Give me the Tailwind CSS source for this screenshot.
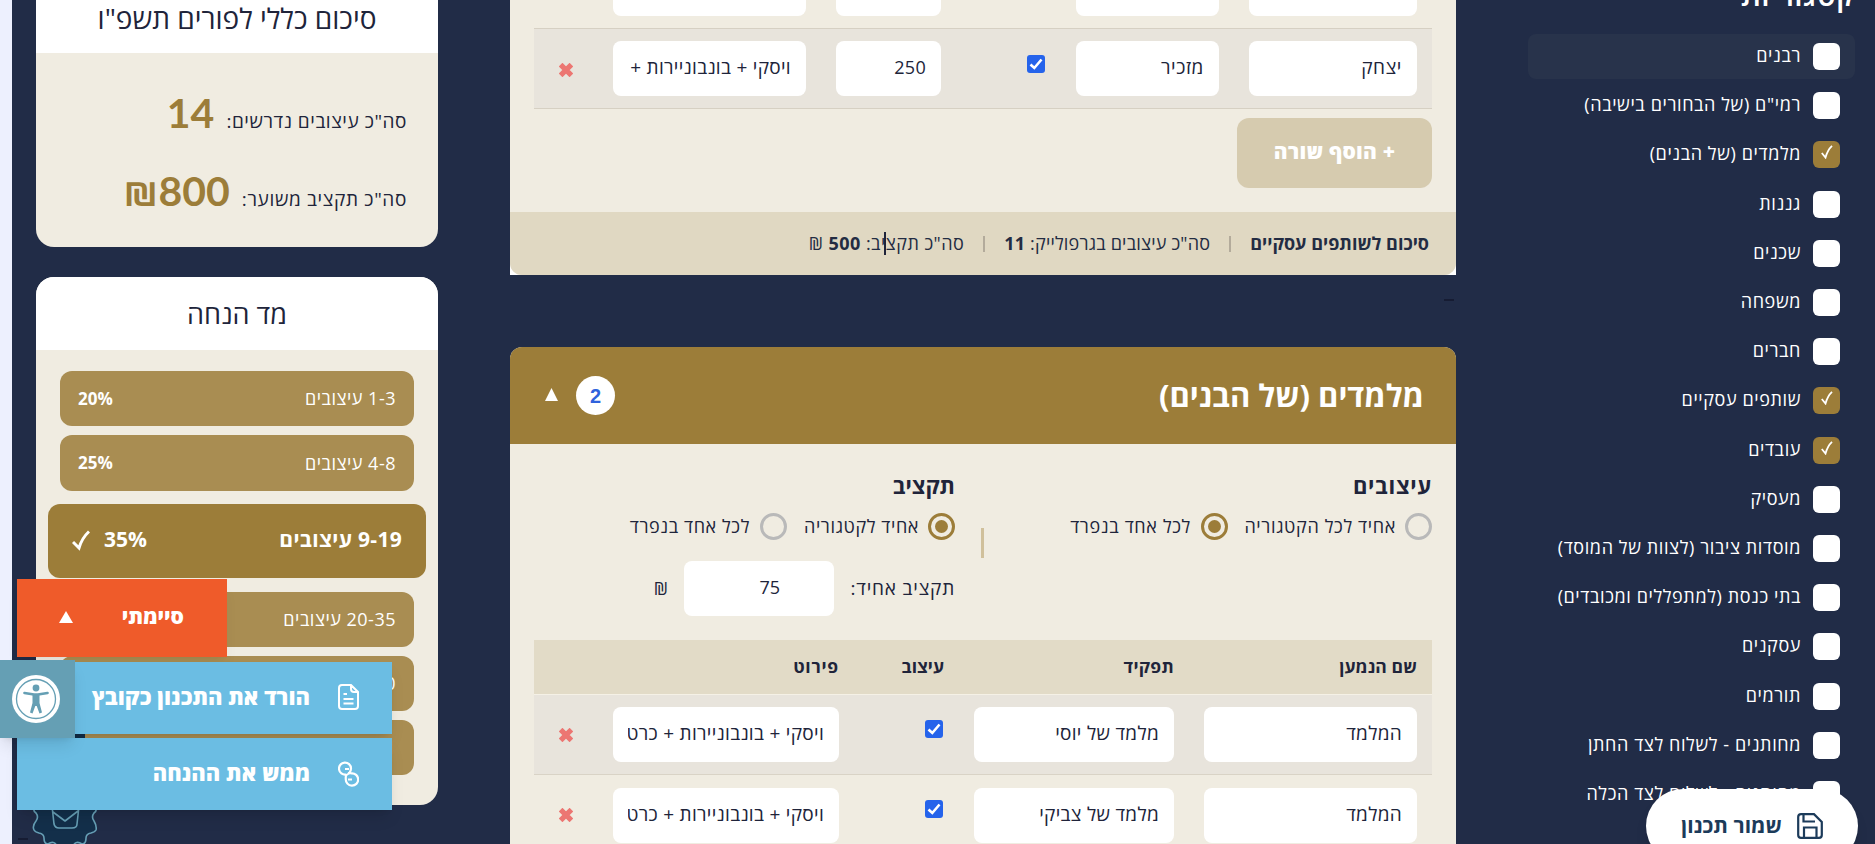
<!DOCTYPE html>
<html lang="he" dir="rtl">
<head>
  <meta charset="UTF-8" />
  <title>תכנון משלוחים</title>
  <script src="https://cdn.jsdelivr.net/npm/@tailwindcss/browser@4"></script>
</head>
<body class="h-[844px] overflow-hidden bg-[#212c47] font-['Open_Sans','Liberation_Sans',sans-serif] text-[#20243a]">
  <div class="relative flex h-full overflow-hidden">
    <!-- Categories -->
    <aside class="w-[347px] shrink-0 pr-5 text-white">
      <h2 class="-mt-6 mb-5 h-[38px] text-[30px] leading-[38px] font-semibold tracking-[.4px]">קטגוריות</h2>
      <ul id="categories" class="flex flex-col gap-1"></ul>
    </aside>

    <main class="mr-[72px] h-full w-[946px] shrink-0 overflow-hidden">
      <!-- Business partners -->
      <section class="h-[275px] bg-white">
        <div class="flex h-full flex-col overflow-hidden rounded-b-xl bg-[#f0ece1]">
          <div class="mx-6 flex h-7">
            <div class="mr-[15px] h-4 w-[168px] rounded-b-lg bg-white"></div>
            <div class="mr-[30px] h-4 w-[143px] rounded-b-lg bg-white"></div>
            <div class="mr-[135px] h-4 w-[105px] rounded-b-lg bg-white"></div>
            <div class="mr-[30px] h-4 w-[193px] rounded-b-lg bg-white"></div>
          </div>
          <div class="mx-6 flex h-[81px] shrink-0 items-center border-y border-[#d6d0c3] bg-[#e8e4dc] text-[19px] tracking-[.3px]">
            <div class="w-[198px] px-[15px]"><div class="h-[55px] rounded-lg bg-white px-[15px] leading-[53px] tracking-[.6px]">יצחק</div></div>
            <div class="w-[173px] px-[15px]"><div class="h-[55px] rounded-lg bg-white px-[15px] leading-[53px] tracking-[.6px]">מזכיר</div></div>
            <div class="w-[105px] px-[16px] pb-2.5">
              <svg class="size-[18px] rounded-[3px] bg-[#2563eb]" viewBox="0 0 18 18" fill="none" stroke="#fff" stroke-width="2.6"><path d="M3.5 9.5 7.3 13 14.5 4.5" /></svg>
            </div>
            <div class="w-[135px] px-[15px]"><div class="h-[55px] rounded-lg bg-white px-[15px] text-[18px] leading-[53px]">250</div></div>
            <div class="w-[223px] px-[15px]"><div class="h-[55px] overflow-hidden rounded-lg bg-white px-[15px] leading-[53px] whitespace-nowrap">ויסקי + בונבוניירות +</div></div>
            <div class="flex w-16 justify-center"><svg class="mt-0.5 size-[14px]" viewBox="0 0 14 14" stroke="#ec7672" stroke-width="5.2"><path d="M1.6 1.6 12.4 12.4M12.4 1.6 1.6 12.4" /></svg></div>
          </div>
          <button class="mt-[9px] mr-6 h-[70px] w-[195px] shrink-0 rounded-xl bg-[#d6cbaf] pb-0.5 text-[21px] font-extrabold tracking-[.2px] text-white">+ הוסף שורה</button>
          <footer class="mt-6 flex h-[63px] items-center bg-[#e0d8c2] pr-[27px] text-[18px] text-[#232c42]">
            <b>סיכום לשותפים עסקיים</b>
            <span class="mx-[19px] h-4 w-0.5 bg-[#b3ab9b]"></span>
            <span class="tracking-[.2px]">סה"כ עיצובים בגרפולייק: <b>11</b></span>
            <span class="mx-[19px] h-4 w-0.5 bg-[#b3ab9b]"></span>
            <span class="tracking-[.45px]">סה"כ תקציב: <b>500</b> ₪</span>
          </footer>
        </div>
      </section>

      <div class="h-[72px] pt-6 pr-0.5"><div class="h-0.5 w-2.5 bg-[#161c33]"></div></div>

      <!-- Teachers -->
      <section class="h-[600px] overflow-hidden rounded-t-xl bg-[#f0ece1]">
        <header class="flex h-[97px] items-center bg-[#9c7d39] pr-[32px] pl-[35px] text-white">
          <h3 class="text-[31px] font-bold">מלמדים (של הבנים)</h3>
          <span class="mr-auto flex size-[39px] items-center justify-center rounded-full bg-white font-['Liberation_Sans'] text-[20px] font-bold text-[#2f62dc]">2</span>
          <svg class="mr-[18px] mb-0.5 h-[13px] w-[13px]" viewBox="0 0 13 13" fill="#fff"><path d="M6.5 0 13 13H0Z" /></svg>
        </header>

        <div class="flex h-[196px] px-6 pt-[25px]">
          <div class="w-[448px]">
            <h4 class="h-[44px] text-[22px] leading-8 font-bold tracking-[.7px]">עיצובים</h4>
            <div class="flex items-center text-[18px] tracking-[.65px]">
              <span class="size-[27px] shrink-0 rounded-full border-3 border-[#b9b9b9]"></span>
              <span class="mr-[9px] w-[168px] leading-[27px] whitespace-nowrap">אחיד לכל הקטגוריה</span>
              <span class="flex size-[27px] items-center justify-center rounded-full border-3 border-[#9c7d39]"><i class="size-[13px] rounded-full bg-[#9c7d39]"></i></span>
              <span class="mr-[10px]">לכל אחד בנפרד</span>
            </div>
          </div>
          <div class="mt-[59px] h-[30px] w-[3px] bg-[#d0c09b]"></div>
          <div class="mr-[26px] flex-1">
            <h4 class="h-[44px] text-[22px] leading-8 font-bold">תקציב</h4>
            <div class="flex items-center text-[18px] tracking-[.6px]">
              <span class="flex size-[27px] items-center justify-center rounded-full border-3 border-[#9c7d39]"><i class="size-[13px] rounded-full bg-[#9c7d39]"></i></span>
              <span class="mr-[9px] w-[132px] leading-[27px] whitespace-nowrap">אחיד לקטגוריה</span>
              <span class="size-[27px] rounded-full border-3 border-[#b9b9b9]"></span>
              <span class="mr-[10px]">לכל אחד בנפרד</span>
            </div>
            <div class="mt-[21px] flex items-center text-[18px]">
              <span class="w-[121px] text-[19px] tracking-[.8px] whitespace-nowrap">תקציב אחיד:</span>
              <span class="h-[55px] w-[150px] rounded-lg bg-white pr-[54px] leading-[53px]">75</span>
              <span class="mr-4">₪</span>
            </div>
          </div>
        </div>

        <div class="mx-6 text-[19px] tracking-[.3px]">
          <div class="flex h-[55px] items-center border-b border-[#f5f1e6] bg-[#e2dbc7] pb-0.5 text-[17.5px] font-bold">
            <div class="w-[243px] pr-[15px] tracking-[.1px]">שם הנמען</div>
            <div class="w-[230px] pr-[15px]">תפקיד</div>
            <div class="w-[105px] pr-[15px] tracking-normal">עיצוב</div>
            <div class="pr-[15px] tracking-[.8px]">פירוט</div>
          </div>
          <div class="flex h-20 items-center border-b border-[#d9d3c6] bg-[#e8e4dc]">
            <div class="w-[243px] px-[15px]"><div class="h-[55px] rounded-lg bg-white px-[15px] leading-[53px]">המלמד</div></div>
            <div class="w-[230px] px-[15px]"><div class="h-[55px] rounded-lg bg-white px-[15px] leading-[53px]">מלמד של יוסי</div></div>
            <div class="w-[105px] px-[16px] pb-3">
              <svg class="size-[18px] rounded-[3px] bg-[#2563eb]" viewBox="0 0 18 18" fill="none" stroke="#fff" stroke-width="2.6"><path d="M3.5 9.5 7.3 13 14.5 4.5" /></svg>
            </div>
            <div class="w-[256px] px-[15px]"><div class="h-[55px] rounded-lg bg-white px-[15px] leading-[53px]"><div class="overflow-hidden whitespace-nowrap">ויסקי + בונבוניירות + כרטיס</div></div></div>
            <div class="flex w-16 justify-center"><svg class="size-[14px]" viewBox="0 0 14 14" stroke="#ec7672" stroke-width="5.2"><path d="M1.6 1.6 12.4 12.4M12.4 1.6 1.6 12.4" /></svg></div>
          </div>
          <div class="flex h-20 items-center">
            <div class="w-[243px] px-[15px]"><div class="h-[55px] rounded-lg bg-white px-[15px] leading-[53px]">המלמד</div></div>
            <div class="w-[230px] px-[15px]"><div class="h-[55px] rounded-lg bg-white px-[15px] leading-[53px]">מלמד של צביקי</div></div>
            <div class="w-[105px] px-[16px] pb-3">
              <svg class="size-[18px] rounded-[3px] bg-[#2563eb]" viewBox="0 0 18 18" fill="none" stroke="#fff" stroke-width="2.6"><path d="M3.5 9.5 7.3 13 14.5 4.5" /></svg>
            </div>
            <div class="w-[256px] px-[15px]"><div class="h-[55px] rounded-lg bg-white px-[15px] leading-[53px]"><div class="overflow-hidden whitespace-nowrap">ויסקי + בונבוניירות + כרטיס</div></div></div>
            <div class="flex w-16 justify-center"><svg class="size-[14px]" viewBox="0 0 14 14" stroke="#ec7672" stroke-width="5.2"><path d="M1.6 1.6 12.4 12.4M12.4 1.6 1.6 12.4" /></svg></div>
          </div>
        </div>
      </section>
    </main>

    <!-- Summary and discount meter -->
    <aside class="mr-[72px] w-[402px] shrink-0">
      <section class="h-[247px] overflow-hidden rounded-b-[18px] bg-[#f0ece1]">
        <h3 class="h-[53px] bg-white text-center text-[28px] leading-9">סיכום כללי לפורים תשפ"ו</h3>
        <div class="mt-[29px] flex h-[61px] items-baseline gap-3 pr-[31px] text-[19px] tracking-[.55px]">סה"כ עיצובים נדרשים: <b class="font-['Lato','Open_Sans'] text-[41px] tracking-normal text-[#9c7d39]">14</b></div>
        <div class="mt-[17px] flex h-[61px] items-baseline gap-3 pr-[31px] text-[19px] tracking-[.65px]">סה"כ תקציב משוער: <b class="flex font-['Lato','Open_Sans'] text-[41px] tracking-normal text-[#9c7d39]"><span>800</span><span>₪</span></b></div>
      </section>

      <section class="mt-[30px] h-[528px] overflow-hidden rounded-[18px] bg-[#f0ece1]">
        <h3 class="h-[73px] bg-white text-center text-[27px] leading-[74px]">מד הנחה</h3>
        <div class="mt-[21px] flex flex-col gap-[9px] px-6 text-[18px] font-medium tracking-[.5px] text-white">
          <div class="flex h-[55px] items-center justify-between rounded-xl bg-[#a98d52] px-[18px]"><span>1-3 עיצובים</span><b class="text-[17px] tracking-normal">20%</b></div>
          <div class="flex h-[56px] items-center justify-between rounded-xl bg-[#a98d52] px-[18px]"><span>4-8 עיצובים</span><b class="text-[17px] tracking-normal">25%</b></div>
          <div class="-mx-3 mt-1 mb-[5px] flex h-[74px] items-center rounded-xl bg-[#9c7d39] px-6 pb-0.5 text-[21px] font-bold">
            <span class="tracking-[.3px]">9-19 עיצובים</span>
            <span class="mr-auto tracking-normal">35%</span>
            <svg class="mr-[14px] h-[21px] w-[18px]" viewBox="0 0 18 21" fill="none" stroke="#fff" stroke-width="3"><path d="M1 12 7 18 Q10 8 17 1.5" /></svg>
          </div>
          <div class="flex h-[55px] items-center justify-between rounded-xl bg-[#a98d52] px-[18px]"><span>20-35 עיצובים</span></div>
          <div class="flex h-[55px] items-center justify-between rounded-xl bg-[#a98d52] px-[18px]"><span>36-50 עיצובים</span></div>
          <div class="flex h-[55px] items-center justify-between rounded-xl bg-[#a98d52] px-[18px]"><span>51 עיצובים ומעלה</span></div>
        </div>
      </section>
    </aside>

    <div class="absolute inset-y-0 left-0 w-3 bg-[#edf0fe]"></div>

    <!-- Text caret in the footer -->
    <div class="absolute top-[232px] left-[884px] h-[23px] w-0.5 bg-[#20243a]"></div>
    <div class="absolute top-[838px] left-[18px] h-0.5 w-2.5 bg-[#161c33]"></div>

    <!-- Newsletter badge -->
    <svg class="absolute top-[734px] left-[30px] h-[110px] w-[70px]" viewBox="0 0 70 110" fill="#132f4a" stroke="#669fb5" stroke-width="1.6" stroke-linejoin="round">
      <path stroke="none" d="M10 0H55V50H10Z" />
      <path d="M4 74Q3 77 6 79Q9 83 6 87Q2 92 4 96Q5 98 9 99Q14 100 14 104Q14 110 18 110Q24 106 27 112H43Q46 106 52 110Q56 110 56 104Q56 100 61 99Q65 98 66 96Q67 92 64 87Q61 83 64 79Q67 77 66 74Z" />
      <path d="M22 72 24 90Q25 94 29 94H42Q47 94 47 90L49 72M23 78 35 87 48 77" />
    </svg>

    <!-- Floating actions -->
    <div class="absolute top-[579px] left-[17px] flex h-[78px] w-[210px] items-center bg-[#ef5b2a] pr-[43px] pb-0.5 text-[21px] font-extrabold text-white shadow-lg shadow-black/5">
      סיימתי
      <svg class="mr-auto ml-[42px] h-3 w-[14px]" viewBox="0 0 14 12" fill="#fff"><path d="M7 0 14 12H0Z" /></svg>
    </div>
    <div class="absolute top-[662px] left-[17px] flex h-[72px] w-[375px] items-center bg-[#6bbde3] pr-[33px] pb-1 text-[22px] font-extrabold text-white shadow-lg shadow-black/10">
      <svg class="mt-0.5 ml-7 h-[26px] w-[21px] shrink-0" viewBox="0 0 21 26" fill="none" stroke="#fff" stroke-width="2"><path d="M13 1H4Q1 1 1 4V22Q1 25 4 25H17Q20 25 20 22V8ZV5Q13 8 16 8H20M5.500 10H9M5.500 15H15.500M5.500 19.500H15.500" /></svg>
      הורד את התכנון כקובץ
    </div>
    <div class="absolute top-[738px] left-[17px] flex h-[72px] w-[375px] items-center bg-[#6bbde3] pr-[33px] pb-1 text-[22px] font-extrabold text-white shadow-lg shadow-black/10">
      <svg class="mt-1 ml-7 h-[26px] w-[21px] shrink-0" viewBox="0 0 21 26" fill="none" stroke="#fff" stroke-width="2.2"><path d="M8 13.500A6 6 0 1 1 13 7.500Q13 10 11.500 11.500M7 8H11M8.500 13Q7.500 15 7.800 18A6.200 6.200 0 1 0 13.500 12.300Q11 12 8.500 14M10 18.500H14M11 11V13" /></svg>
      ממש את ההנחה
    </div>

    <!-- Accessibility toggle -->
    <div class="absolute top-[660px] left-0 flex h-[78px] w-[75px] items-center justify-center bg-[#659fb4] pr-[3px] shadow-lg shadow-black/10">
      <svg class="size-12" viewBox="0 0 48 48">
        <circle cx="24" cy="24" r="24" fill="#fff" />
        <circle cx="24" cy="24" r="19.500" fill="none" stroke="#659fb4" stroke-width="1.300" />
        <circle cx="24" cy="13" r="3.400" fill="#659fb4" />
        <path d="M12.500 18 22 19.500H26L35.500 18" fill="none" stroke="#659fb4" stroke-width="2.700" stroke-linecap="round" stroke-linejoin="round" />
        <path d="M20.500 19H27.500V28L30 37.500 27.500 38.500 24.700 31H23.300L20.500 38.500 18 37.500 20.500 28Z" fill="#659fb4" />
      </svg>
    </div>

    <!-- Save -->
    <button class="absolute top-[789px] left-[1646px] flex h-[74px] w-[212px] items-center rounded-full bg-white pr-[35px] text-[21px] font-bold text-[#1c3b5a] shadow-lg">
      <svg class="ml-[15px] size-[26px]" viewBox="0 0 26 26" fill="none" stroke="currentColor" stroke-width="2.200"><path d="M4 1.200H17L24.800 9V22Q24.800 24.800 22 24.800H4Q1.200 24.800 1.200 22V4Q1.200 1.200 4 1.200ZM6.500 1.500V8.500H18M7 24.500V14.500H19.500V24.500" /></svg>
      שמור תכנון
    </button>
  </div>

  <script>
    const categories = [
      ["רבנים", false],
      ['רמי"ם (של הבחורים בישיבה)', false],
      ["מלמדים (של הבנים)", true],
      ["גננות", false],
      ["שכנים", false],
      ["משפחה", false],
      ["חברים", false],
      ["שותפים עסקיים", true],
      ["עובדים", true],
      ["מעסיק", false],
      ["מוסדות ציבור (לצוות של המוסד)", false],
      ["בתי כנסת (למתפללים ומכובדים)", false],
      ["עסקנים", false],
      ["תורמים", false],
      ["מחותנים - לשלוח לצד החתן", false],
      ["מחותנים - לשלוח לצד הכלה", false],
    ];

    const list = document.getElementById("categories");
    categories.forEach(([name, checked], i) => {
      const box = checked
        ? `<span class="size-[27px] rounded-md bg-[#9c7d39]"><svg class="mx-auto mt-1 h-[14px] w-3" viewBox="0 0 12 14" fill="none" stroke="#fff" stroke-width="1.8"><path d="M.8 8 4.500 12.500Q6.500 5 11 .8" /></svg></span>`
        : `<span class="size-[27px] rounded-md bg-white"></span>`;
      list.innerHTML += `<li class="flex h-[45.2px] w-[327px] items-center gap-3 rounded-lg px-[15px] text-[18px] font-medium tracking-[.6px] ${i === 0 ? "bg-[#28334b]" : ""}">${box}<span class="pb-0.5">${name}</span></li>`;
    });
  </script>
</body>
</html>
